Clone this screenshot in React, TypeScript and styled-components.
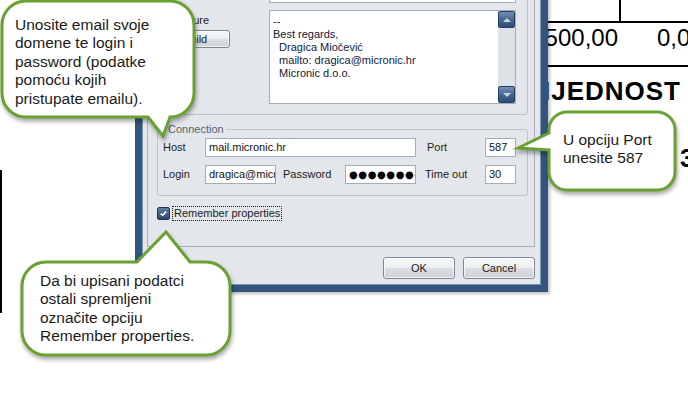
import React from 'react';
import styled, { createGlobalStyle } from 'styled-components';

const GlobalStyle = createGlobalStyle`
  html, body {
    margin: 0;
    padding: 0;
    background: #ffffff;
  }
  body {
    font-family: "Liberation Sans", Arial, sans-serif;
  }
`;

const Page = styled.div`
  position: relative;
  width: 688px;
  height: 403px;
  overflow: hidden;
  background: #ffffff;
`;

/* ---------- the printed document behind the dialog ---------- */

const Sheet = styled.div`
  display: flex;
  justify-content: space-between;
  height: 100%;
  color: #000;
`;

const LeftRule = styled.div`
  width: 2px;
  height: 143px;
  margin-top: 170px;
  background: #000;
`;

const TableEdge = styled.div`
  width: 142px;
  flex: none;
`;

const TopCells = styled.div`
  display: flex;
  height: 23px;
  box-sizing: border-box;
  border-bottom: 2px solid #000;
`;

const RuledCell = styled.div`
  width: 75px;
  box-sizing: border-box;
  border-right: 2px solid #000;
`;

const AmountRow = styled.div`
  display: flex;
  height: 44px;
  box-sizing: border-box;
  padding-top: 1px;
  border-bottom: 2px solid #000;
  font-size: 24px;
  line-height: 28px;
  white-space: nowrap;
`;

const Amount = styled.div<{ $w?: number; $pad?: number; $end?: boolean }>`
  display: flex;
  justify-content: ${p => (p.$end ? 'flex-end' : 'flex-start')};
  width: ${p => (p.$w ? `${p.$w}px` : 'auto')};
  flex: ${p => (p.$w ? 'none' : 1)};
  box-sizing: border-box;
  padding: ${p => (p.$end ? `0 ${p.$pad ?? 0}px 0 0` : `0 0 0 ${p.$pad ?? 0}px`)};
`;

const Heading = styled.div`
  display: flex;
  justify-content: flex-end;
  margin-top: 9px;
  padding-right: 7px;
  font-size: 26px;
  line-height: 30px;
  font-weight: bold;
  letter-spacing: 1px;
  white-space: nowrap;
`;

const Figure = styled.div`
  margin-top: 37px;
  padding-left: 134px;
  font-size: 26px;
  line-height: 30px;
  font-weight: bold;
  white-space: nowrap;
`;

/* ---------- the dialog window ---------- */

const Window = styled.div`
  position: absolute;
  left: 135px;
  top: -20px;
  width: 413px;
  height: 312px;
  box-sizing: border-box;
  display: flex;
  flex-direction: column;
  padding: 0 6px 6px 5px;
  border: 7px solid #33547c;
  border-top: none;
  background: #e3e7eb;
  box-shadow: inset 0 0 0 1px #7d95b2, 2px 2px 3px rgba(0, 0, 0, 0.25);
  font-family: "Liberation Sans", Arial, sans-serif;
  font-size: 11px;
  color: #1c1c1c;
`;

const Panel = styled.div`
  flex: 1;
  display: flex;
  flex-direction: column;
  padding: 0 6px 0 9px;
  border: 1px solid #a9b2bc;
  border-top: none;
`;

const SignatureGroup = styled.div`
  display: grid;
  grid-template-columns: 70px 247px;
  grid-template-rows: 21px 94px;
  column-gap: 39px;
  row-gap: 7px;
  padding: 1px 10px 10px 2px;
  border: 1px solid #bcc4cd;
  border-radius: 3px;
`;

const Field = styled.div<{ $col?: string }>`
  grid-column: ${p => p.$col ?? 'auto'};
  box-sizing: border-box;
  height: 100%;
  padding: 0 3px;
  border: 1px solid #a4adb8;
  background: #ffffff;
  line-height: 17px;
  white-space: nowrap;
  overflow: hidden;
  color: #121212;
`;

const Dots = styled.span`
  font-family: "DejaVu Sans", sans-serif;
  font-size: 10px;
  letter-spacing: 0.6px;
  color: #000;
`;

const SideColumn = styled.div`
  display: flex;
  flex-direction: column;
  align-items: flex-start;
`;

const FieldLabel = styled.div<{ $indent?: number }>`
  padding-left: ${p => p.$indent ?? 0}px;
  line-height: 19px;
  white-space: nowrap;
`;

const TopLabel = styled.div`
  margin-top: 4px;
  padding-left: 2px;
  line-height: 13px;
`;

const PushButton = styled.button<{ $w: number; $h: number }>`
  width: ${p => p.$w}px;
  height: ${p => p.$h}px;
  padding: 0;
  border: 1px solid #7d8897;
  border-radius: 3px;
  background: linear-gradient(#f7f8f9 0%, #eceef0 48%, #dadee2 52%, #cdd2d8 100%);
  box-shadow: inset 0 0 0 1px rgba(255, 255, 255, 0.75);
  font-family: "Liberation Sans", Arial, sans-serif;
  font-size: 11px;
  color: #1c1c1c;
`;

const BuildButton = styled(PushButton)`
  margin-top: 3px;
`;

const Memo = styled.div`
  display: flex;
  box-sizing: border-box;
  border: 1px solid #a4adb8;
  background: #ffffff;
`;

const MemoText = styled.div`
  flex: 1;
  padding: 4px 3px;
  line-height: 13px;
  white-space: pre;
  overflow: hidden;
  color: #13203a;
`;

const ScrollBar = styled.div`
  width: 17px;
  display: flex;
  flex-direction: column;
  background: #dde2e7;
`;

const ScrollArrow = styled.div<{ $down?: boolean }>`
  height: 17px;
  box-sizing: border-box;
  display: flex;
  align-items: center;
  justify-content: center;
  border: 1px solid #243f63;
  border-radius: 2px;
  background: linear-gradient(#7390b4 0%, #47668e 50%, #2e4c74 100%);

  &::after {
    content: '';
    border-left: 4px solid transparent;
    border-right: 4px solid transparent;
    ${p => (p.$down ? 'border-top: 4px solid #c8d4e2;' : 'border-bottom: 4px solid #c8d4e2;')}
  }
`;

const ScrollTrack = styled.div`
  flex: 1;
`;

const GroupBox = styled.fieldset`
  margin: 8px 0 0;
  padding: 2px 10px 11px 5px;
  min-width: 0;
  border: 1px solid #bcc4cd;
  border-radius: 3px;
`;

const Legend = styled.legend`
  margin-left: 3px;
  padding: 0 2px;
  line-height: 13px;
  color: #566372;
`;

const ConnGrid = styled.div`
  display: grid;
  grid-template-columns: 42px 71px 69px 71px 69px 31px;
  grid-template-rows: 19px 19px;
  row-gap: 8px;
`;

const CheckRow = styled.div`
  display: flex;
  align-items: center;
  gap: 2px;
  margin-top: 10px;
  height: 15px;
`;

const CheckBox = styled.span`
  width: 13px;
  height: 13px;
  box-sizing: border-box;
  display: flex;
  align-items: center;
  justify-content: center;
  border: 1px solid #1f3656;
  border-radius: 2px;
  background: linear-gradient(#5d7ca2, #2b476d);
`;

const FocusLabel = styled.span`
  padding: 0 1px;
  border: 1px dotted #222;
  line-height: 13px;
`;

const ButtonRow = styled.div`
  display: flex;
  justify-content: flex-end;
  gap: 8px;
  margin-top: 10px;
`;

/* ---------- callouts ---------- */

interface Tail {
  side: 'top' | 'bottom' | 'left';
  a: number;
  b: number;
  tip: [number, number];
}

function bubblePath(w: number, h: number, r: number, t: Tail) {
  const [tx, ty] = t.tip;
  let d = `M ${r} 0`;
  if (t.side === 'top') d += ` L ${t.a} 0 L ${tx} ${ty} L ${t.b} 0`;
  d += ` L ${w - r} 0 A ${r} ${r} 0 0 1 ${w} ${r} L ${w} ${h - r} A ${r} ${r} 0 0 1 ${w - r} ${h}`;
  if (t.side === 'bottom') d += ` L ${t.b} ${h} L ${tx} ${ty} L ${t.a} ${h}`;
  d += ` L ${r} ${h} A ${r} ${r} 0 0 1 0 ${h - r}`;
  if (t.side === 'left') d += ` L 0 ${t.b} L ${tx} ${ty} L 0 ${t.a}`;
  d += ` L 0 ${r} A ${r} ${r} 0 0 1 ${r} 0 Z`;
  return d;
}

const CalloutBox = styled.div<{ $x: number; $y: number; $w: number; $h: number; $px: number; $py: number }>`
  position: absolute;
  z-index: 2;
  left: ${p => p.$x}px;
  top: ${p => p.$y}px;
  width: ${p => p.$w}px;
  height: ${p => p.$h}px;
  box-sizing: border-box;
  padding: ${p => p.$py}px 0 0 ${p => p.$px}px;
  font-family: "Liberation Sans", Arial, sans-serif;
  font-size: 15.5px;
  line-height: 18.4px;
  color: #1a1a1a;
  white-space: nowrap;
`;

const CalloutShape = styled.svg`
  position: absolute;
  left: 0;
  top: 0;
  z-index: -1;
  overflow: visible;
  filter: drop-shadow(1px 3px 2px rgba(0, 0, 0, 0.35));
`;

interface CalloutProps {
  x: number;
  y: number;
  w: number;
  h: number;
  r: number;
  px: number;
  py: number;
  tail: Tail;
  lines: string[];
}

function Callout({ x, y, w, h, r, px, py, tail, lines }: CalloutProps) {
  return (
    <CalloutBox $x={x} $y={y} $w={w} $h={h} $px={px} $py={py}>
      <CalloutShape width={w} height={h}>
        <path d={bubblePath(w, h, r, tail)} fill="#ffffff" stroke="#6aa232" strokeWidth={3} />
      </CalloutShape>
      {lines.map(l => (
        <div key={l}>{l}</div>
      ))}
    </CalloutBox>
  );
}

const signature = ['--', 'Best regards,', '  Dragica Miočević', '  mailto: dragica@micronic.hr', '  Micronic d.o.o.'];

export default function App() {
  return (
    <Page>
      <GlobalStyle />
      <Sheet>
        <LeftRule />
        <TableEdge>
          <TopCells>
            <RuledCell />
          </TopCells>
          <AmountRow>
            <Amount $w={73} $pad={1} $end>1.500,00</Amount>
            <Amount $pad={38}>0,00</Amount>
          </AmountRow>
          <Heading>VRIJEDNOST</Heading>
          <Figure>35</Figure>
        </TableEdge>
      </Sheet>

      <Window>
        <Panel>
          <SignatureGroup>
            <div />
            <Field />
            <SideColumn>
              <TopLabel>Signature</TopLabel>
              <BuildButton $w={70} $h={18}>Build</BuildButton>
            </SideColumn>
            <Memo>
              <MemoText>{signature.join('\n')}</MemoText>
              <ScrollBar>
                <ScrollArrow />
                <ScrollTrack />
                <ScrollArrow $down />
              </ScrollBar>
            </Memo>
          </SignatureGroup>

          <GroupBox>
            <Legend>Connection</Legend>
            <ConnGrid>
              <FieldLabel>Host</FieldLabel>
              <Field $col="2 / span 3">mail.micronic.hr</Field>
              <FieldLabel $indent={11}>Port</FieldLabel>
              <Field>587</Field>
              <FieldLabel>Login</FieldLabel>
              <Field>dragica@micronic.hr</Field>
              <FieldLabel $indent={7}>Password</FieldLabel>
              <Field>
                <Dots>●●●●●●●●●●</Dots>
              </Field>
              <FieldLabel $indent={9}>Time out</FieldLabel>
              <Field>30</Field>
            </ConnGrid>
          </GroupBox>

          <CheckRow>
            <CheckBox>
              <svg width="9" height="9" viewBox="0 0 9 9">
                <path d="M1.8 4.6 L3.7 6.4 L7.2 2.6" fill="none" stroke="#ffffff" strokeWidth={1.6} />
              </svg>
            </CheckBox>
            <FocusLabel>Remember properties</FocusLabel>
          </CheckRow>
        </Panel>

        <ButtonRow>
          <PushButton $w={72} $h={22}>OK</PushButton>
          <PushButton $w={72} $h={22}>Cancel</PushButton>
        </ButtonRow>
      </Window>

      <Callout
        x={2}
        y={1}
        w={192}
        h={116}
        r={24}
        px={13}
        py={15}
        tail={{ side: 'bottom', a: 146, b: 168, tip: [161, 135] }}
        lines={['Unosite email svoje', 'domene te login i', 'password (podatke', 'pomoću kojih', 'pristupate emailu).']}
      />
      <Callout
        x={549}
        y={112}
        w={126}
        h={78}
        r={18}
        px={14}
        py={19}
        tail={{ side: 'left', a: 21, b: 38, tip: [-31, 36] }}
        lines={['U opciju Port', 'unesite 587']}
      />
      <Callout
        x={22}
        y={262}
        w={208}
        h={93}
        r={24}
        px={18}
        py={10}
        tail={{ side: 'top', a: 115, b: 168, tip: [144, -30] }}
        lines={['Da bi upisani podatci', 'ostali spremljeni', 'označite opciju', 'Remember properties.']}
      />
    </Page>
  );
}
